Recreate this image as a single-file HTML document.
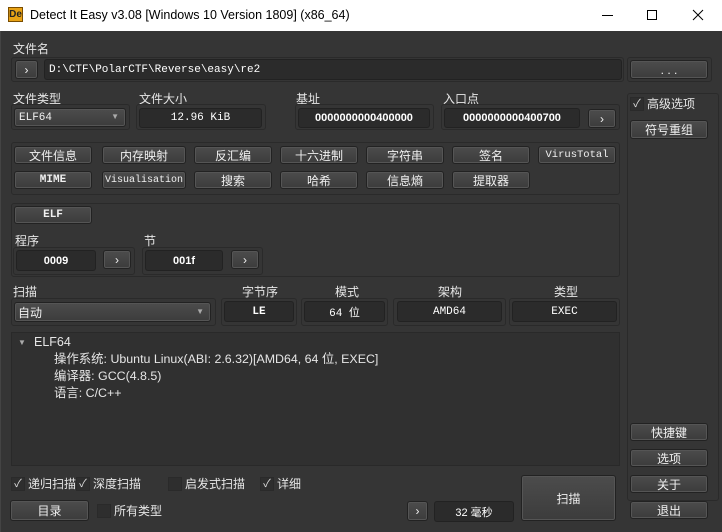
<!DOCTYPE html>
<html><head><meta charset="utf-8"><style>
*{box-sizing:border-box;margin:0;padding:0}
body{width:722px;height:532px;background:#353535;position:relative;overflow:hidden;font-family:"Liberation Sans","Noto Sans CJK SC",sans-serif;font-size:12px;color:#e6e6e6}
.a{position:absolute}
.t{position:absolute;white-space:nowrap;line-height:14px}
.fr{position:absolute;border:1px solid #2a2a2a;border-radius:3px}
.box{position:absolute;background:#2b2b2b;border:1px solid #222;border-radius:3px;text-align:center;font-family:"Liberation Mono","Noto Sans CJK SC",monospace;font-size:11px;color:#fff;display:flex;align-items:center;justify-content:center}
.b{position:absolute;background:linear-gradient(#4c4c4c,#3c3c3c);border:1px solid #222;box-shadow:inset 0 0 0 1px #555;border-radius:3px;text-align:center;color:#f0f0f0;display:flex;align-items:center;justify-content:center;font-size:12px;white-space:nowrap;overflow:hidden}
.m{font-family:"Liberation Mono",monospace;font-size:11px}
.cb{position:absolute;width:14px;height:14px;background:#2e2e2e;border:1px solid #2a2a2a;color:#ddd;font-size:11px;line-height:13px;text-align:center}
</style></head><body>
<div class="a" style="left:0;top:0;width:722px;height:31px;background:#fff"></div>
<div class="a" style="left:8px;top:7px;width:15px;height:15px;background:#e8a215;border:1px solid #7a4d00;font:bold 10px 'Liberation Sans';color:#222;line-height:13px;text-align:center">De</div>
<div class="t" style="left:30px;top:8px;color:#000;font-size:12.5px">Detect It Easy v3.08 [Windows 10 Version 1809] (x86_64)</div>
<div class="a" style="left:602px;top:15px;width:11px;height:1px;background:#000"></div>
<div class="a" style="left:647px;top:10px;width:10px;height:10px;border:1px solid #000"></div>
<svg class="a" style="left:692px;top:9px" width="12" height="12"><path d="M1 1L11 11M11 1L1 11" stroke="#000" stroke-width="1"/></svg>

<div class="t" style="left:13px;top:42px">文件名</div>
<div class="fr" style="left:11px;top:57px;width:613px;height:25px"></div>
<div class="b" style="left:15px;top:60px;width:23px;height:19px">›</div>
<div class="box" style="left:44px;top:59px;width:578px;height:21px;justify-content:flex-start;padding-left:4px">D:\CTF\PolarCTF\Reverse\easy\re2</div>
<div class="fr" style="left:627px;top:57px;width:85px;height:25px"></div>
<div class="b" style="left:630px;top:60px;width:78px;height:19px">. . .</div>

<div class="t" style="left:13px;top:92px">文件类型</div>
<div class="fr" style="left:11px;top:104px;width:119px;height:26px"></div>
<div class="b" style="left:14px;top:108px;width:112px;height:19px;justify-content:flex-start;padding-left:4px"><span class="m">ELF64</span><span style="position:absolute;right:6px;top:3px;font-size:8px;color:#aaa">▼</span></div>
<div class="t" style="left:139px;top:92px">文件大小</div>
<div class="fr" style="left:136px;top:104px;width:130px;height:26px"></div>
<div class="box" style="left:139px;top:108px;width:123px;height:20px">12.96 KiB</div>
<div class="t" style="left:296px;top:92px">基址</div>
<div class="fr" style="left:295px;top:104px;width:139px;height:26px"></div>
<div class="box" style="left:298px;top:108px;width:132px;height:20px;font-family:'Liberation Sans';font-weight:bold">0000000000400000</div>
<div class="t" style="left:443px;top:92px">入口点</div>
<div class="fr" style="left:441px;top:104px;width:179px;height:26px"></div>
<div class="box" style="left:444px;top:108px;width:136px;height:20px;font-family:'Liberation Sans';font-weight:bold">0000000000400700</div>
<div class="b" style="left:588px;top:109px;width:28px;height:19px">›</div>

<div class="fr" style="left:627px;top:93px;width:92px;height:408px"></div>
<div class="cb" style="left:630px;top:97px">✓</div>
<div class="t" style="left:647px;top:97px">高级选项</div>
<div class="b" style="left:630px;top:120px;width:78px;height:19px">符号重组</div>

<div class="fr" style="left:11px;top:142px;width:609px;height:53px"></div>
<div class="b" style="left:14px;top:146px;width:78px;height:18px">文件信息</div>
<div class="b" style="left:102px;top:146px;width:84px;height:18px">内存映射</div>
<div class="b" style="left:194px;top:146px;width:78px;height:18px">反汇编</div>
<div class="b" style="left:280px;top:146px;width:78px;height:18px">十六进制</div>
<div class="b" style="left:366px;top:146px;width:78px;height:18px">字符串</div>
<div class="b" style="left:452px;top:146px;width:78px;height:18px">签名</div>
<div class="b m" style="left:538px;top:146px;width:78px;height:18px;font-size:10.5px">VirusTotal</div>
<div class="b m" style="left:14px;top:171px;width:78px;height:18px;font-weight:bold">MIME</div>
<div class="b m" style="left:102px;top:171px;width:84px;height:18px;font-size:10px">Visualisation</div>
<div class="b" style="left:194px;top:171px;width:78px;height:18px">搜索</div>
<div class="b" style="left:280px;top:171px;width:78px;height:18px">哈希</div>
<div class="b" style="left:366px;top:171px;width:78px;height:18px">信息熵</div>
<div class="b" style="left:452px;top:171px;width:78px;height:18px">提取器</div>

<div class="fr" style="left:11px;top:203px;width:609px;height:74px"></div>
<div class="b m" style="left:14px;top:206px;width:78px;height:18px;font-weight:bold">ELF</div>
<div class="t" style="left:15px;top:234px">程序</div>
<div class="fr" style="left:13px;top:247px;width:122px;height:28px"></div>
<div class="box" style="left:16px;top:250px;width:80px;height:21px;font-family:'Liberation Sans';font-weight:bold">0009</div>
<div class="b" style="left:103px;top:250px;width:28px;height:19px">›</div>
<div class="t" style="left:144px;top:234px">节</div>
<div class="fr" style="left:142px;top:247px;width:121px;height:28px"></div>
<div class="box" style="left:145px;top:250px;width:78px;height:21px;font-family:'Liberation Sans';font-weight:bold">001f</div>
<div class="b" style="left:231px;top:250px;width:28px;height:19px">›</div>

<div class="t" style="left:13px;top:285px">扫描</div>
<div class="fr" style="left:11px;top:298px;width:205px;height:28px"></div>
<div class="b" style="left:14px;top:302px;width:197px;height:20px;justify-content:flex-start;padding-left:3px">自动<span style="position:absolute;right:6px;top:4px;font-size:8px;color:#aaa">▼</span></div>
<div class="t" style="left:242px;top:285px">字节序</div>
<div class="fr" style="left:221px;top:298px;width:76px;height:28px"></div>
<div class="box" style="left:224px;top:301px;width:70px;height:21px;font-weight:bold">LE</div>
<div class="t" style="left:335px;top:285px">模式</div>
<div class="fr" style="left:301px;top:298px;width:87px;height:28px"></div>
<div class="box" style="left:304px;top:301px;width:81px;height:21px">64 位</div>
<div class="t" style="left:438px;top:285px">架构</div>
<div class="fr" style="left:393px;top:298px;width:113px;height:28px"></div>
<div class="box" style="left:397px;top:301px;width:105px;height:21px">AMD64</div>
<div class="t" style="left:554px;top:285px">类型</div>
<div class="fr" style="left:509px;top:298px;width:111px;height:28px"></div>
<div class="box" style="left:512px;top:301px;width:105px;height:21px">EXEC</div>

<div class="a" style="left:11px;top:332px;width:609px;height:134px;background:#303030;border:1px solid #292929"></div>
<div class="t" style="left:18px;top:336px;font-size:8px;color:#aaa">▼</div>
<div class="t" style="left:34px;top:335px;font-size:12.5px">ELF64</div>
<div class="t" style="left:54px;top:352px;font-size:12.4px">操作系统: Ubuntu Linux(ABI: 2.6.32)[AMD64, 64 位, EXEC]</div>
<div class="t" style="left:54px;top:369px;font-size:12.4px">编译器: GCC(4.8.5)</div>
<div class="t" style="left:54px;top:386px;font-size:12.4px">语言: C/C++</div>

<div class="cb" style="left:11px;top:477px">✓</div><div class="t" style="left:28px;top:477px">递归扫描</div>
<div class="cb" style="left:76px;top:477px">✓</div><div class="t" style="left:93px;top:477px">深度扫描</div>
<div class="cb" style="left:168px;top:477px"></div><div class="t" style="left:185px;top:477px">启发式扫描</div>
<div class="cb" style="left:260px;top:477px">✓</div><div class="t" style="left:277px;top:477px">详细</div>
<div class="b" style="left:10px;top:500px;width:79px;height:21px">目录</div>
<div class="cb" style="left:97px;top:504px"></div><div class="t" style="left:114px;top:504px">所有类型</div>
<div class="b" style="left:407px;top:501px;width:21px;height:20px">›</div>
<div class="box" style="left:434px;top:501px;width:80px;height:21px;font-family:'Liberation Sans'">32 毫秒</div>
<div class="b" style="left:521px;top:475px;width:95px;height:46px">扫描</div>

<div class="b" style="left:630px;top:423px;width:78px;height:18px">快捷键</div>
<div class="b" style="left:630px;top:449px;width:78px;height:18px">选项</div>
<div class="b" style="left:630px;top:475px;width:78px;height:18px">关于</div>
<div class="b" style="left:630px;top:501px;width:78px;height:18px">退出</div>
<div class="a" style="left:0;top:31px;width:1px;height:501px;background:#444"></div>
</body></html>
